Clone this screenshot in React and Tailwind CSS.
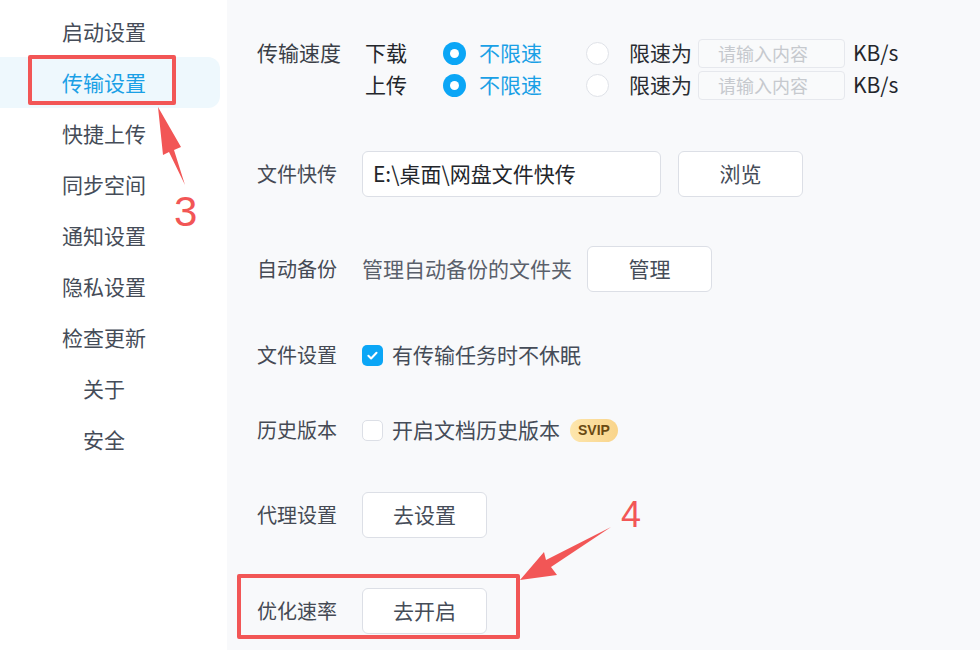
// Settings page - transfer settings panel with annotation marks.
const FONT = { fontFamily: '"Noto Sans CJK SC", "Noto Sans", sans-serif' };
const LATIN = { fontFamily: '"Liberation Sans", Arial, sans-serif' };

const NAV = [
  { label: "启动设置" },
  { label: "传输设置", active: true },
  { label: "快捷上传" },
  { label: "同步空间" },
  { label: "通知设置" },
  { label: "隐私设置" },
  { label: "检查更新" },
  { label: "关于", indent: true },
  { label: "安全", indent: true },
];

function Radio({ checked }) {
  return checked ? (
    <span className="flex h-[23px] w-[23px] items-center justify-center rounded-full bg-[#0ba6f6]">
      <span className="h-[9px] w-[9px] rounded-full bg-white" />
    </span>
  ) : (
    <span className="h-[23px] w-[23px] rounded-full border border-[#dfe2e8] bg-white" />
  );
}

function Checkbox({ checked }) {
  return checked ? (
    <span className="flex h-[21px] w-[21px] items-center justify-center rounded-[5px] bg-[#0ba6f6]">
      <svg width="13" height="13" viewBox="0 0 12 12" fill="none">
        <path d="M2.2 6.3l2.5 2.4 5-5.2" stroke="white" strokeWidth="1.9" strokeLinecap="round" strokeLinejoin="round" />
      </svg>
    </span>
  ) : (
    <span className="h-[21px] w-[21px] rounded-[5px] border border-[#dcdfe6] bg-white" />
  );
}

function Btn({ children, className = "" }) {
  return (
    <button className={`h-[46px] w-[125px] rounded-[6px] border border-[#dcdfe6] bg-white text-[21px] text-[#454c58] ${className}`}>
      {children}
    </button>
  );
}

function SpeedLine({ label }) {
  return (
    <div className="flex h-[32px] items-center">
      <span className="w-[78px] text-[21px] text-[#23262b]">{label}</span>
      <Radio checked />
      <span className="ml-[13px] w-[107px] text-[21px] text-[#1aa0e6]">不限速</span>
      <Radio />
      <span className="ml-[20px] text-[21px] text-[#2a2d33]">限速为</span>
      <div className="ml-[6px] flex h-[29px] w-[147px] items-center rounded-[4px] border border-[#e6e8ed] bg-[#f9fafb] pl-[19px] text-[18px] text-[#c6c9ce]">
        请输入内容
      </div>
      <span className="ml-[8px] text-[21px] text-[#23262b]">KB/s</span>
    </div>
  );
}

function Label({ children }) {
  return <span className="w-[105px] shrink-0 text-[20px] text-[#454a54]">{children}</span>;
}

export default function App() {
  return (
    <div className="relative flex h-[650px] w-[980px] overflow-hidden bg-white" style={FONT}>
      {/* sidebar */}
      <nav className="w-[227px] shrink-0 bg-white pt-[6px]">
        {NAV.map((n) => (
          <div
            key={n.label}
            className={`mr-[7px] flex h-[51px] items-center rounded-r-[12px] text-[21px] ${
              n.indent ? "pl-[83px]" : "pl-[62px]"
            } ${n.active ? "bg-[#eef8fd] text-[#1aa0e6]" : "text-[#454c58]"}`}
          >
            {n.label}
          </div>
        ))}
      </nav>

      {/* content */}
      <main className="flex-1 bg-[#f8f9fb] pl-[30px]">
        <div className="mt-[37px] flex">
          <div className="flex h-[32px] items-center">
            <span className="w-[108px] text-[21px] text-[#3b3f47]">传输速度</span>
          </div>
          <div>
            <SpeedLine label="下载" />
            <SpeedLine label="上传" />
          </div>
        </div>

        <div className="mt-[50px] flex items-center">
          <Label>文件快传</Label>
          <div className="flex h-[46px] w-[299px] items-center rounded-[6px] border border-[#dcdfe6] bg-white pl-[10px] text-[21px] text-[#23262b]">
            E:\桌面\网盘文件快传
          </div>
          <Btn className="ml-[17px]">浏览</Btn>
        </div>

        <div className="mt-[49px] flex items-center">
          <Label>自动备份</Label>
          <span className="text-[21px] text-[#5a606b]">管理自动备份的文件夹</span>
          <Btn className="ml-[15px]">管理</Btn>
        </div>

        <div className="mt-[40px] flex h-[46px] items-center">
          <Label>文件设置</Label>
          <Checkbox checked />
          <span className="ml-[9px] text-[21px] text-[#454c58]">有传输任务时不休眠</span>
        </div>

        <div className="mt-[29px] flex h-[46px] items-center">
          <Label>历史版本</Label>
          <Checkbox />
          <span className="ml-[9px] text-[21px] text-[#454c58]">开启文档历史版本</span>
          <span
            className="ml-[10px] flex h-[23px] items-center rounded-full bg-gradient-to-r from-[#fde6ad] to-[#f9d48a] px-[8px] text-[14px] font-semibold text-[#6a4912]"
            style={LATIN}
          >
            SVIP
          </span>
        </div>

        <div className="mt-[39px] flex items-center">
          <Label>代理设置</Label>
          <Btn>去设置</Btn>
        </div>

        <div className="mt-[50px] flex items-center">
          <Label>优化速率</Label>
          <Btn>去开启</Btn>
        </div>
      </main>

      {/* annotations */}
      <div className="absolute left-[28px] top-[55px] h-[50px] w-[148px] rounded-[2px] border-[4px] border-[#f25656]" />
      <div className="absolute left-[237px] top-[574px] h-[65px] w-[283px] rounded-[2px] border-[4px] border-[#f25656]" />
      <svg className="absolute left-0 top-0" width="980" height="650" viewBox="0 0 980 650" fill="none">
        <path d="M158 107 L181 147 L174 150 L185 185 L169 152 L163 155 Z" fill="#f25656" />
        <path d="M520 580 L544 552 L546 560 L611 527 L551 567 L557 575 Z" fill="#f25656" />
      </svg>
      <span className="absolute left-[174px] top-[191px] text-[42px] leading-none text-[#f25656]" style={LATIN}>
        3
      </span>
      <span className="absolute left-[621px] top-[497px] text-[36px] leading-none text-[#f25656]" style={LATIN}>
        4
      </span>
    </div>
  );
}
